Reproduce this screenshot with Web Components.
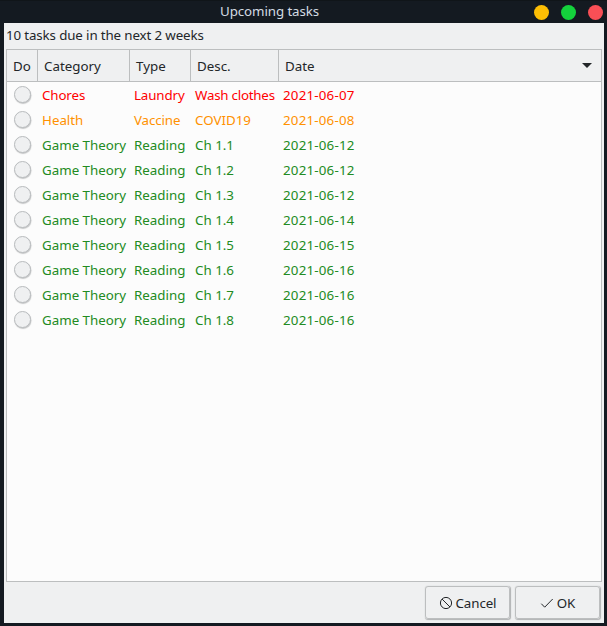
<!DOCTYPE html>
<html lang="en">
<head>
<meta charset="utf-8">
<title>Upcoming tasks</title>
<style>
html,body{margin:0;height:100%;background:#141a21;overflow:hidden}
body{font:13.333px/18px "Noto Sans",sans-serif;color:#232629}
</style>
</head>
<body>
<app-window></app-window>
<script>
class Base extends HTMLElement {
  constructor() {
    super();
    this.attachShadow({ mode: 'open' });
  }
  connectedCallback() { this.shadowRoot.innerHTML = this.render(); }
}

customElements.define('title-bar', class extends Base {
  render() {
    return `<style>
      :host{display:grid;grid-template-columns:1fr auto;height:23px;box-shadow:inset 0 1px #101519;color:#d3dae3}
      .t{padding-left:220px;line-height:23px;letter-spacing:-.09px;white-space:pre}
      .b{display:flex;gap:12px;padding:5px 4px 0 0}
      i{width:15px;height:15px;border-radius:50%}
      </style><div class="t"><slot></slot></div>
      <div class="b"><i style="background:#fdbe04"></i><i style="background:#14d23c"></i><i style="background:#f94f56"></i></div>`;
  }
});

customElements.define('check-dot', class extends Base {
  render() {
    return `<style>
      :host{display:block;width:17px;height:17px;box-sizing:border-box;border:1px solid #b9bcbe;border-radius:50%;background:#eff0f1;box-shadow:.5px 1px 1px #c4c5c6}
      </style>`;
  }
});

customElements.define('task-header', class extends Base {
  render() {
    const cells = ['Do', 'Category', 'Type', 'Desc.', 'Date'];
    return `<style>
      :host{display:grid;grid-template-columns:31px 92px 61px 88px 1fr;height:31px;background:#eff0f1;border-bottom:1px solid #bcbebf}
      div{box-sizing:border-box;padding-left:6px;line-height:32px;border-right:1px solid #bcbebf}
      div:last-child{border:0;display:flex;justify-content:space-between;padding-right:9px}
      svg{margin-top:13px}
      </style>${cells.map((c, i) => `<div>${c}${i === 4 ? '<svg width="10" height="5" viewBox="0 0 10 5"><path d="M0 0H10L5 5Z" fill="#232629"/></svg>' : ''}</div>`).join('')}`;
  }
});

customElements.define('task-row', class extends Base {
  render() {
    const v = this.getAttribute('values').split('|');
    return `<style>
      :host{display:grid;grid-template-columns:31px 92px 61px 88px 1fr;height:25px;line-height:25px;white-space:nowrap}
      check-dot{margin:2.5px 0 0 6.5px}
      span{padding-left:4px}
      .tight{letter-spacing:-.23px}
      .snug{letter-spacing:-.12px}
      .loose{letter-spacing:.2px}
      </style><check-dot></check-dot>${v.map((x, i) => {
        const k = i === 3 ? 'loose' : x === 'Wash clothes' ? 'tight' : /^(Chores|Laundry|Vaccine)$/.test(x) ? 'snug' : '';
        return `<span class="${k}">${x}</span>`;
      }).join('')}`;
  }
});

customElements.define('task-table', class extends Base {
  render() {
    const rows = [
      ['#ff0000', 'Chores|Laundry|Wash clothes|2021-06-07'],
      ['#ff9100', 'Health|Vaccine|COVID19|2021-06-08'],
      ...['12', '12', '12', '14', '15', '16', '16', '16'].map((d, i) =>
        ['#228b22', `Game Theory|Reading|Ch 1.${i + 1}|2021-06-${d}`])
    ];
    return `<style>
      :host{display:block;box-sizing:border-box;border:1px solid #bcbebf;background:#fcfcfc}
      .r{padding-top:1px}
      </style><task-header></task-header><div class="r">${rows.map(([c, v]) => `<task-row style="color:${c}" values="${v}"></task-row>`).join('')}</div>`;
  }
});

customElements.define('push-button', class extends Base {
  render() {
    return `<style>
      :host{display:flex;align-items:center;justify-content:center;gap:3px;box-sizing:border-box;width:85px;height:33px;margin-right:1px;border:1px solid #bcbebf;border-radius:3px;box-shadow:.5px .5px 1px #b0b2b3;letter-spacing:-.1px}
      </style><slot name="icon"></slot><span><slot></slot></span>`;
  }
});

customElements.define('app-window', class extends Base {
  render() {
    return `<style>
      :host{display:block;width:607px;height:626px}
      main{display:flex;flex-direction:column;box-sizing:border-box;width:600px;height:600px;margin-left:4px;padding:0 2px;background:#eff0f1}
      p{margin:0;height:26px;line-height:25px;letter-spacing:-.13px}
      task-table{height:533px}
      footer{display:flex;justify-content:flex-end;gap:4px;padding:4px 1px 0 0}
      svg{display:block;fill:none;stroke:#232629}
      </style>
      <title-bar>Upcoming tasks</title-bar>
      <main><p>10 tasks due in the next 2 weeks</p>
      <task-table></task-table>
      <footer>
        <push-button><svg slot="icon" width="14" height="14" viewBox="0 0 14 14"><circle cx="7" cy="7" r="5.6"/><path d="M3 3L11 11"/></svg>Cancel</push-button>
        <push-button><svg slot="icon" width="14" height="14" viewBox="0 0 14 14"><path d="M1.3 7.7L4.7 11.2L12.7 3"/></svg>OK</push-button>
      </footer></main>`;
  }
});
</script>
</body>
</html>
